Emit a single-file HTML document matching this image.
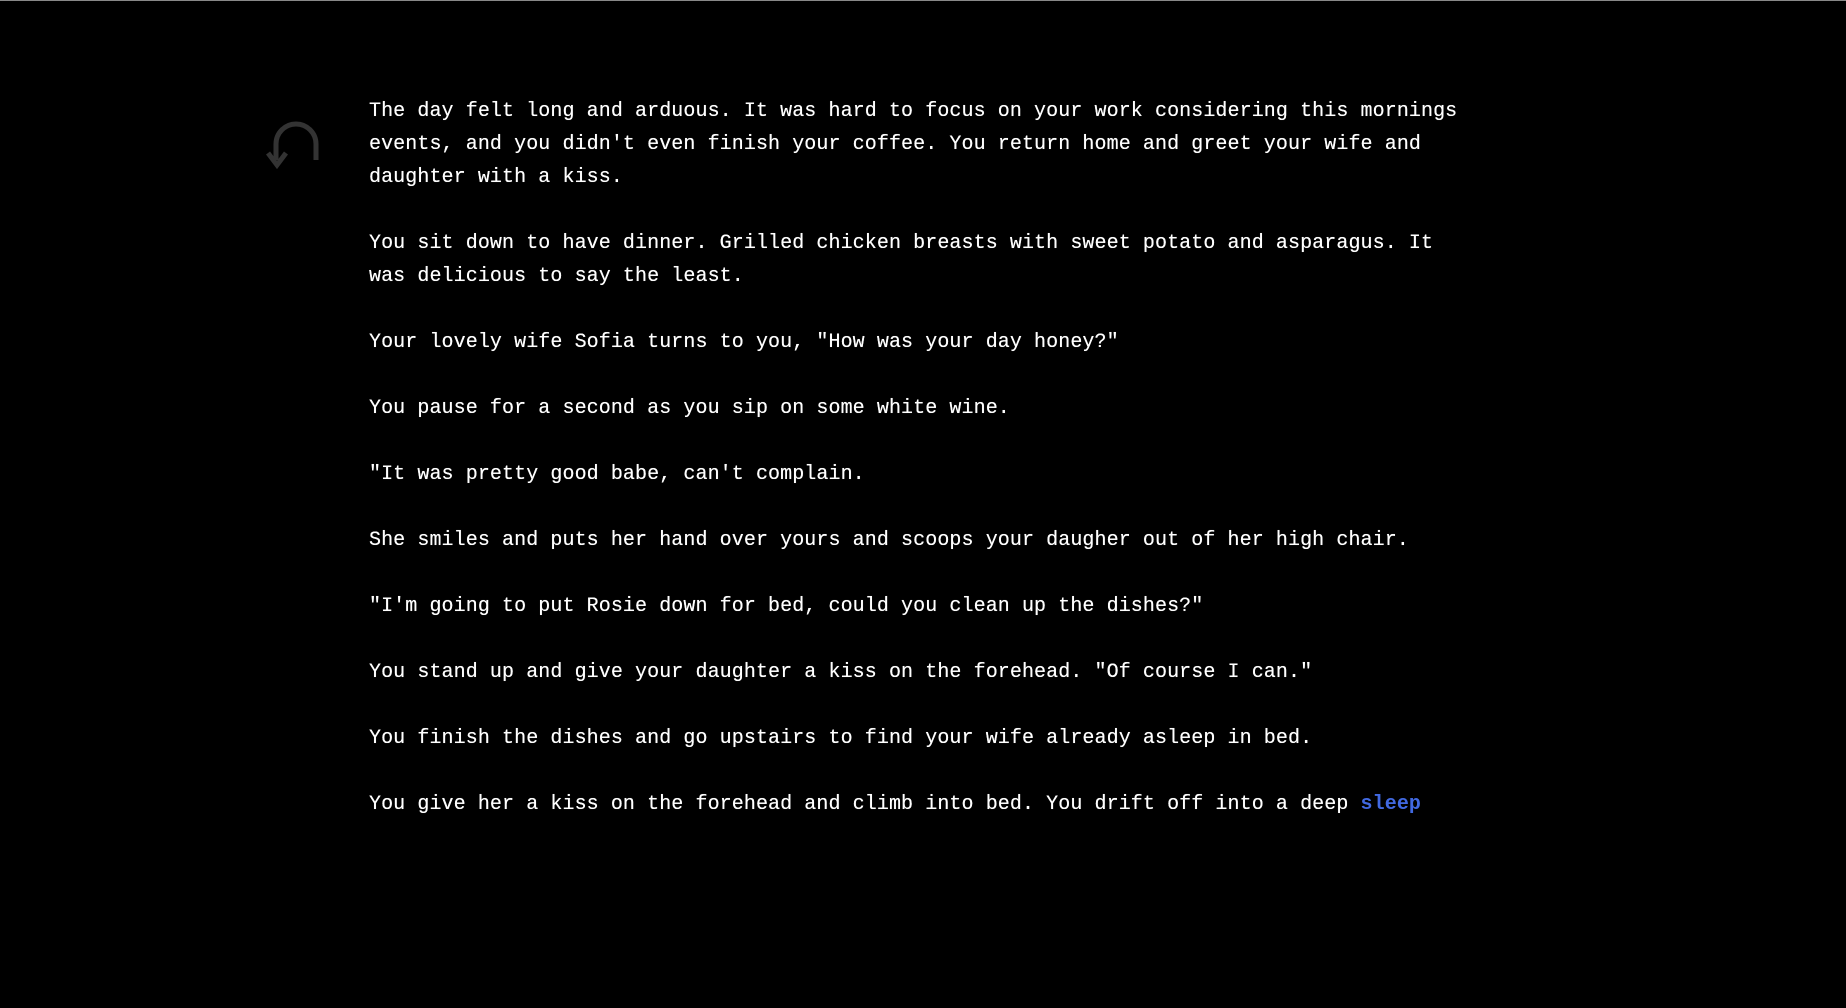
<!DOCTYPE html>
<html><head><meta charset="utf-8"><style>
html,body{margin:0;padding:0;background:#000;width:1846px;height:1008px;overflow:hidden}
body{border-top:1px solid #888;box-sizing:border-box}
.t{position:absolute;left:369px;top:95px;width:1110px;font-family:"Liberation Mono",monospace;font-size:20px;letter-spacing:0.09px;line-height:33px;color:#fff;font-weight:500;text-shadow:0 0 0.4px #fff}
.t p{margin:0 0 33px 0}
.s{color:#4169e1;font-weight:bold;text-shadow:none}
svg{position:absolute;left:264px;top:120px}
</style></head><body>
<svg width="62" height="54" viewBox="0 0 62 54"><path d="M52 40 V24 A20 20 0 0 0 12 24 V40" fill="none" stroke="#333" stroke-width="5"/><path d="M4 33 L13 45 L22 33" fill="none" stroke="#333" stroke-width="5"/></svg>
<div class="t">
<p>The day felt long and arduous. It was hard to focus on your work considering this mornings events, and you didn't even finish your coffee. You return home and greet your wife and daughter with a kiss.</p>
<p>You sit down to have dinner. Grilled chicken breasts with sweet potato and asparagus. It was delicious to say the least.</p>
<p>Your lovely wife Sofia turns to you, "How was your day honey?"</p>
<p>You pause for a second as you sip on some white wine.</p>
<p>"It was pretty good babe, can't complain.</p>
<p>She smiles and puts her hand over yours and scoops your daugher out of her high chair.</p>
<p>"I'm going to put Rosie down for bed, could you clean up the dishes?"</p>
<p>You stand up and give your daughter a kiss on the forehead. "Of course I can."</p>
<p>You finish the dishes and go upstairs to find your wife already asleep in bed.</p>
<p>You give her a kiss on the forehead and climb into bed. You drift off into a deep <span class="s">sleep</span></p>
</div>
</body></html>
